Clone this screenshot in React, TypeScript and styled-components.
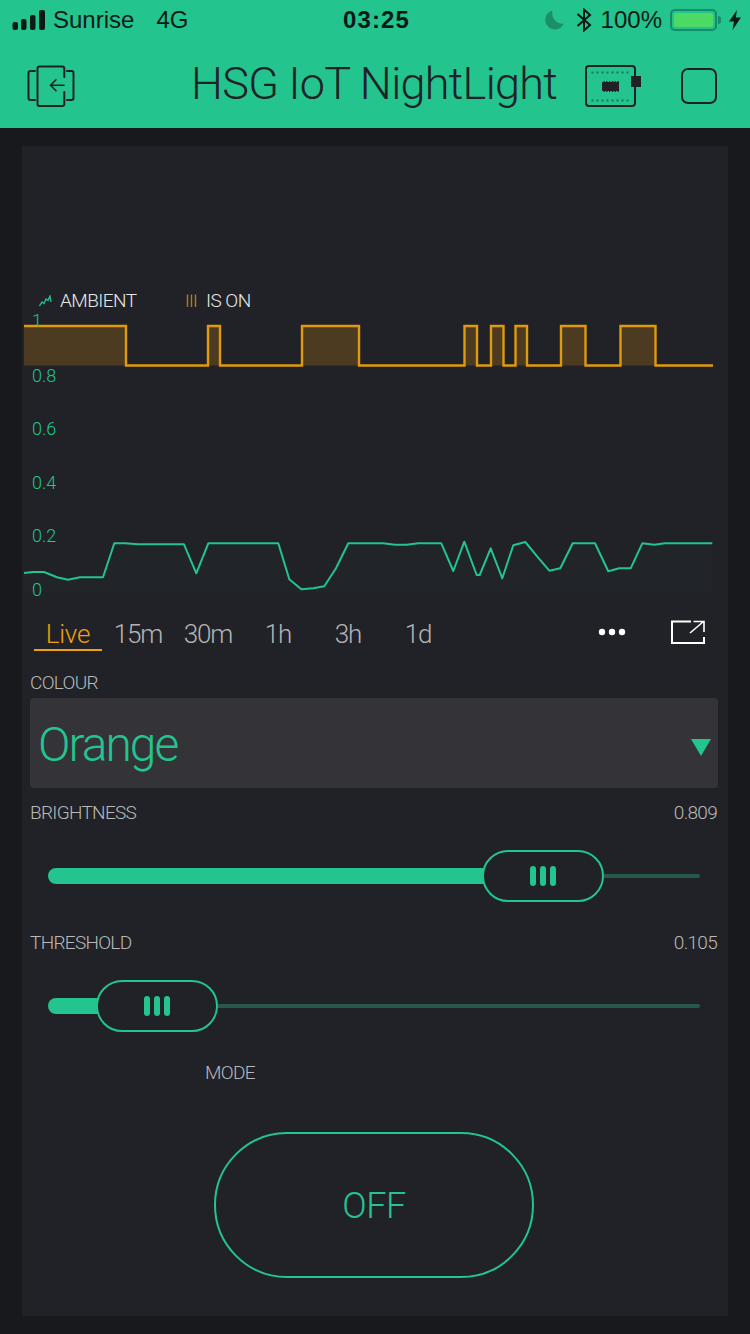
import React from "react";
import styled, { createGlobalStyle } from "styled-components";

const GREEN = "#23c48e";
const PANEL = "#212227";
const UI_FONT = `Roboto, "Liberation Sans", sans-serif`;
const SYS_FONT = `"Liberation Sans", Arial, sans-serif`;

const Global = createGlobalStyle`
  html, body { margin: 0; padding: 0; background: #17191d; }
  * { box-sizing: border-box; }
`;

const Page = styled.div`
  width: 750px;
  height: 1334px;
  overflow: hidden;
  background: #17191d;
  font-family: ${UI_FONT};
`;

const Top = styled.header`
  height: 128px;
  background: ${GREEN};
`;

const StatusBar = styled.div`
  height: 40px;
  display: flex;
  align-items: center;
  padding: 0 9px 0 12px;
  font-family: ${SYS_FONT};
  font-size: 24px;
  color: #0b1a16;
`;

const StatusLeft = styled.div`
  width: 331px;
  display: flex;
  align-items: center;
  gap: 7px;
`;

const Carrier = styled.span`
  margin-right: 15px;
`;

const Clock = styled.div`
  font-weight: 700;
  font-size: 24px;
  letter-spacing: 1.1px;
  width: 68px;
  white-space: nowrap;
`;

const StatusRight = styled.div`
  flex: 1;
  display: flex;
  align-items: center;
  justify-content: flex-end;
  gap: 7px;
`;

const Percent = styled.span`
  font-size: 24px;
`;

const Battery = styled.div`
  width: 47px;
  height: 22px;
  border: 2px solid #178a68;
  border-radius: 5px;
  padding: 2px;
  position: relative;
  margin-left: 1px;
  margin-right: 5px;
  &::before {
    content: "";
    display: block;
    height: 100%;
    background: #4cd964;
    border-radius: 2px;
  }
  &::after {
    content: "";
    position: absolute;
    right: -6px;
    top: 5px;
    width: 3px;
    height: 8px;
    background: #178a68;
    border-radius: 0 3px 3px 0;
  }
`;

const NavBar = styled.nav`
  height: 88px;
  display: flex;
  align-items: center;
  padding: 4px 32px 0 27px;
`;

const Title = styled.h1`
  margin: 0 0 6px 116px;
  width: 394px;
  font-weight: 300;
  font-size: 45px;
  letter-spacing: -0.7px;
  color: ${PANEL};
  white-space: nowrap;
`;

const Body = styled.main`
  padding: 18px 22px 0;
`;

const Panel = styled.section`
  height: 1170px;
  background: ${PANEL};
  display: flex;
  flex-direction: column;
`;

const ChartArea = styled.div`
  position: relative;
  height: 466px;
`;

const ChartSvg = styled.svg`
  display: block;
`;

const AxisLabel = styled.text`
  font-family: ${UI_FONT};
  font-size: 18px;
  font-weight: 300;
  fill: ${GREEN};
`;

const Legend = styled.div`
  position: absolute;
  top: 143px;
  left: 17px;
  display: flex;
  align-items: center;
`;

const LegendItem = styled.div<{ $width: number }>`
  width: ${(p) => p.$width}px;
  display: flex;
  align-items: center;
  gap: 8px;
  font-size: 19px;
  font-weight: 300;
  letter-spacing: -0.55px;
  color: #e8e8e8;
  line-height: 24px;
`;

const TabRow = styled.div`
  height: 40px;
  display: flex;
  align-items: flex-start;
  padding-left: 12px;
`;

const Tab = styled.div<{ $active?: boolean }>`
  width: ${(p) => (p.$active ? 68 : 70)}px;
  height: 39px;
  margin-right: ${(p) => (p.$active ? 1 : 0)}px;
  text-align: center;
  font-size: 26px;
  font-weight: 300;
  letter-spacing: ${(p) => (p.$active ? "-0.2px" : "-1.1px")};
  line-height: 44px;
  color: ${(p) => (p.$active ? "#f0a00c" : "#b4b4b4")};
  border-bottom: ${(p) => (p.$active ? "2px solid #f0a00c" : "none")};
`;

const TabActions = styled.div`
  margin-left: auto;
  display: flex;
  align-items: center;
  gap: 45px;
  padding: 8px 23px 0 0;
`;

const Controls = styled.div`
  padding: 0 10px 0 8px;
  display: flex;
  flex-direction: column;
`;

const LabelRow = styled.div<{ $top: number; $indent?: number }>`
  margin-top: ${(p) => p.$top}px;
  height: 24px;
  padding-left: ${(p) => p.$indent ?? 0}px;
  padding-right: 1px;
  display: flex;
  justify-content: space-between;
  font-size: 19px;
  font-weight: 300;
  letter-spacing: -0.7px;
  line-height: 26px;
  color: #b9b9b9;
`;

const Select = styled.div`
  margin-top: 4px;
  height: 90px;
  background: #333338;
  border-radius: 4px;
  display: flex;
  align-items: center;
  justify-content: space-between;
  padding: 2px 7px 0 8px;
`;

const SelectValue = styled.span`
  font-size: 48px;
  font-weight: 300;
  letter-spacing: -2px;
  color: ${GREEN};
`;

const Caret = styled.span`
  width: 0;
  height: 0;
  margin-top: 6px;
  border-left: 10.5px solid transparent;
  border-right: 10.5px solid transparent;
  border-top: 17px solid ${GREEN};
`;

const Slider = styled.div`
  margin: 26px 18px 0 18px;
  height: 52px;
  display: flex;
  align-items: center;
`;

const SliderFill = styled.div<{ $width: number }>`
  width: ${(p) => p.$width}px;
  height: 16px;
  background: ${GREEN};
  border-radius: 8px 0 0 8px;
`;

const SliderHandle = styled.div`
  width: 122px;
  height: 52px;
  margin-left: -3px;
  border: 2px solid ${GREEN};
  border-radius: 26px;
  background: ${PANEL};
  display: flex;
  align-items: center;
  justify-content: center;
  gap: 4px;
`;

const Grip = styled.span`
  width: 6px;
  height: 20px;
  border-radius: 3px;
  background: ${GREEN};
`;

const SliderRest = styled.div`
  flex: 1;
  height: 4px;
  background: #27584b;
  border-radius: 0 2px 2px 0;
`;

const ToggleWrap = styled.div`
  margin-top: 48px;
  padding-left: 184px;
`;

const Toggle = styled.div`
  width: 320px;
  height: 146px;
  padding-top: 2px;
  border: 2px solid ${GREEN};
  border-radius: 73px;
  display: flex;
  align-items: center;
  justify-content: center;
  font-size: 36px;
  font-weight: 300;
  letter-spacing: -0.5px;
  color: ${GREEN};
`;

const SquareButton = styled.div`
  width: 36px;
  height: 36px;
  flex: none;
  margin-left: 40px;
  border: 2px solid ${PANEL};
  border-radius: 7px;
`;

const squarePts: [number, number][] = [
  [126, 126], [208, 220], [302, 359], [464.5, 477], [491, 503.5], [515.5, 527], [561, 585.5], [620.5, 655.5],
];
const HI = 326;
const LO = 365.5;

const squareLine = (() => {
  let d = `M24 ${HI}`;
  squarePts.forEach(([a, b], i) => {
    if (i === 0) {
      d += ` H${b} V${LO}`;
    } else {
      d += ` H${a} V${HI} H${b} V${LO}`;
    }
  });
  return d + " H713";
})();

const squareFill = (() => {
  let d = `M24 ${HI} H126 V${LO} H24 Z`;
  squarePts.slice(1).forEach(([a, b]) => {
    d += ` M${a} ${HI} H${b} V${LO} H${a} Z`;
  });
  return d;
})();

const ambient =
  "24,573 33,572 44,572 57,577.3 68,579.7 80,577.3 103,577.3 114.3,543.3 125,543.3 138,544.3 184,544.3 196.3,573.3 208.3,543.3 278.3,543.3 289.3,579.3 301.3,589.3 313,588.3 324.3,586.3 336,568.3 348.3,543.3 383,543.3 395,544.7 406.7,544.7 418.3,543.3 441.3,543.3 453.3,571 464.3,541.7 476.7,575 479.7,575 490.7,548.3 502.3,578.3 513.3,545.3 525.3,542 537.3,556.7 549.3,570.7 560.3,568.3 572.7,543.3 595,543.3 608.3,571.3 619.3,568.3 630.7,568.3 642.3,543.3 654.3,544.7 665,543.3 712.3,543.3";

const axis: [string, number][] = [
  ["1", 327], ["0.8", 382], ["0.6", 435], ["0.4", 489], ["0.2", 542], ["0", 596],
];

const Chart = () => (
  <ChartSvg width={706} height={466} viewBox="22 146 706 466">
    <path d={squareFill} fill="#4c3a21" />
    <path d={squareLine} fill="none" stroke="#e09a0e" strokeWidth={2.4} />
    <polygon points={`24,592 ${ambient} 712.3,592`} fill={GREEN} fillOpacity={0.018} />
    <polyline points={ambient} fill="none" stroke={GREEN} strokeWidth={2} strokeLinejoin="round" />
    {axis.map(([t, y]) => (
      <AxisLabel key={t} x={32} y={y}>{t}</AxisLabel>
    ))}
  </ChartSvg>
);

const SignalIcon = () => (
  <svg width={34} height={20} viewBox="0 0 34 20" style={{ display: "block" }}>
    <rect x="0.5" y="12" width="5.5" height="8" rx="2" fill="#0b1a16" />
    <rect x="9" y="9" width="5.5" height="11" rx="2" fill="#0b1a16" />
    <rect x="18" y="5" width="5.5" height="15" rx="2" fill="#0b1a16" />
    <rect x="27" y="0" width="6" height="20" rx="2" fill="#0b1a16" />
  </svg>
);

const MoonIcon = () => (
  <svg width={19} height={20} viewBox="0 0 19 20" style={{ display: "block" }}>
    <path d="M7.5 0.5 A9.6 9.6 0 1 0 18.7 13.6 A10.5 10.5 0 0 1 7.5 0.5 Z" fill="#1a8f69" />
  </svg>
);

const BluetoothIcon = () => (
  <svg width={16} height={24} viewBox="0 0 16 24" style={{ display: "block", margin: "0 2px 0 5px" }}>
    <path d="M1.5 6 L14 17 L8 22.5 V1.5 L14 7 L1.5 18" fill="none" stroke="#0b1a16" strokeWidth={2} />
  </svg>
);

const BoltIcon = () => (
  <svg width={12} height={20} viewBox="0 0 12 20" style={{ display: "block" }}>
    <path d="M8 0 L0 11.5 H5 L3.5 20 L12 7.5 H6.8 Z" fill="#0b1a16" />
  </svg>
);

const BackIcon = () => (
  <svg width={48} height={42} viewBox="0 0 48 42" style={{ display: "block", flex: "none" }} fill="none" stroke={PANEL} strokeWidth={2} strokeLinecap="round" strokeLinejoin="round">
    <path d="M8 6 H3.5 Q1.5 6 1.5 8 V33 Q1.5 35 3.5 35 H8" />
    <path d="M40 6 H44.5 Q46.5 6 46.5 8 V33 Q46.5 35 44.5 35 H40" />
    <path d="M37.3 12 V3.5 Q37.3 1.5 35.3 1.5 H12.5 Q10.5 1.5 10.5 3.5 V39 Q10.5 41 12.5 41 H35.3 Q37.3 41 37.3 39 V27" />
    <path d="M37 20.3 H23.5 M29 14.8 L23.5 20.3 L29 25.8" strokeWidth={1.6} />
  </svg>
);

const BoardIcon = () => {
  const dots = Array.from({ length: 8 }, (_, i) => 6.5 + i * 5);
  const legs = Array.from({ length: 6 }, (_, i) => 18.5 + i * 2.8);
  return (
    <svg width={56} height={42} viewBox="0 0 56 42" style={{ display: "block", flex: "none" }}>
      <rect x="1" y="1" width="49" height="40" rx="3" fill="none" stroke={PANEL} strokeWidth={2} />
      <rect x="46" y="11" width="10" height="11" fill={PANEL} />
      <rect x="17" y="17" width="17" height="9" rx="1" fill={PANEL} />
      {legs.map((x) => (
        <rect key={x} x={x} y="16" width="1.2" height="11" fill={PANEL} />
      ))}
      {dots.map((x) => (
        <React.Fragment key={x}>
          <rect x={x} y="6.5" width="2" height="2" fill="#17795c" />
          <rect x={x} y="34.5" width="2" height="2" fill="#17795c" />
        </React.Fragment>
      ))}
    </svg>
  );
};

const LegendAmbient = () => (
  <svg width={13} height={12} viewBox="0 0 13 12" style={{ display: "block" }}>
    <path d="M0.5 11 L3 7 L5 8.5 L7 4 L9 5.5 L11 1 L12 7" fill="none" stroke={GREEN} strokeWidth={1.3} />
  </svg>
);

const LegendOn = () => (
  <svg width={12} height={14} viewBox="0 0 12 14" style={{ display: "block" }}>
    <path d="M1.5 0.5 V13 M5.5 0.5 V13 M9.5 0.5 V13" fill="none" stroke="#b47c0c" strokeWidth={1.4} />
  </svg>
);

const Dots = () => (
  <svg width={28} height={8} viewBox="0 0 28 8" style={{ display: "block" }}>
    <circle cx="4" cy="4" r="3.2" fill="#fff" />
    <circle cx="14" cy="4" r="3.2" fill="#fff" />
    <circle cx="24" cy="4" r="3.2" fill="#fff" />
  </svg>
);

const ExpandIcon = () => (
  <svg width={34} height={24} viewBox="0 0 34 24" style={{ display: "block" }} fill="none" stroke="#fff" strokeWidth={2}>
    <path d="M20 1.5 H1 V23 H33 V17" />
    <path d="M19 13 L32.5 1.5 M22.5 1.5 H33 V12" strokeWidth={1.6} />
  </svg>
);

const Sliding = ({ fill }: { fill: number }) => (
  <Slider>
    <SliderFill $width={fill} />
    <SliderHandle>
      <Grip />
      <Grip />
      <Grip />
    </SliderHandle>
    <SliderRest />
  </Slider>
);

export default function App() {
  return (
    <Page>
      <Global />
      <Top>
        <StatusBar>
          <StatusLeft>
            <SignalIcon />
            <Carrier>Sunrise</Carrier>
            <span>4G</span>
          </StatusLeft>
          <Clock>03:25</Clock>
          <StatusRight>
            <MoonIcon />
            <BluetoothIcon />
            <Percent>100%</Percent>
            <Battery />
            <BoltIcon />
          </StatusRight>
        </StatusBar>
        <NavBar>
          <BackIcon />
          <Title>HSG IoT NightLight</Title>
          <BoardIcon />
          <SquareButton />
        </NavBar>
      </Top>
      <Body>
        <Panel>
          <ChartArea>
            <Chart />
            <Legend>
              <LegendItem $width={147}>
                <LegendAmbient />
                AMBIENT
              </LegendItem>
              <LegendItem $width={90}>
                <LegendOn />
                IS ON
              </LegendItem>
            </Legend>
          </ChartArea>
          <TabRow>
            <Tab $active>Live</Tab>
            <Tab>15m</Tab>
            <Tab>30m</Tab>
            <Tab>1h</Tab>
            <Tab>3h</Tab>
            <Tab>1d</Tab>
            <TabActions>
              <Dots />
              <ExpandIcon />
            </TabActions>
          </TabRow>
          <Controls>
            <LabelRow $top={18}>
              <span>COLOUR</span>
            </LabelRow>
            <Select>
              <SelectValue>Orange</SelectValue>
              <Caret />
            </Select>
            <LabelRow $top={12}>
              <span>BRIGHTNESS</span>
              <span>0.809</span>
            </LabelRow>
            <Sliding fill={437} />
            <LabelRow $top={28}>
              <span>THRESHOLD</span>
              <span>0.105</span>
            </LabelRow>
            <Sliding fill={51} />
            <LabelRow $top={28} $indent={175}>
              <span>MODE</span>
            </LabelRow>
            <ToggleWrap>
              <Toggle>OFF</Toggle>
            </ToggleWrap>
          </Controls>
        </Panel>
      </Body>
    </Page>
  );
}
